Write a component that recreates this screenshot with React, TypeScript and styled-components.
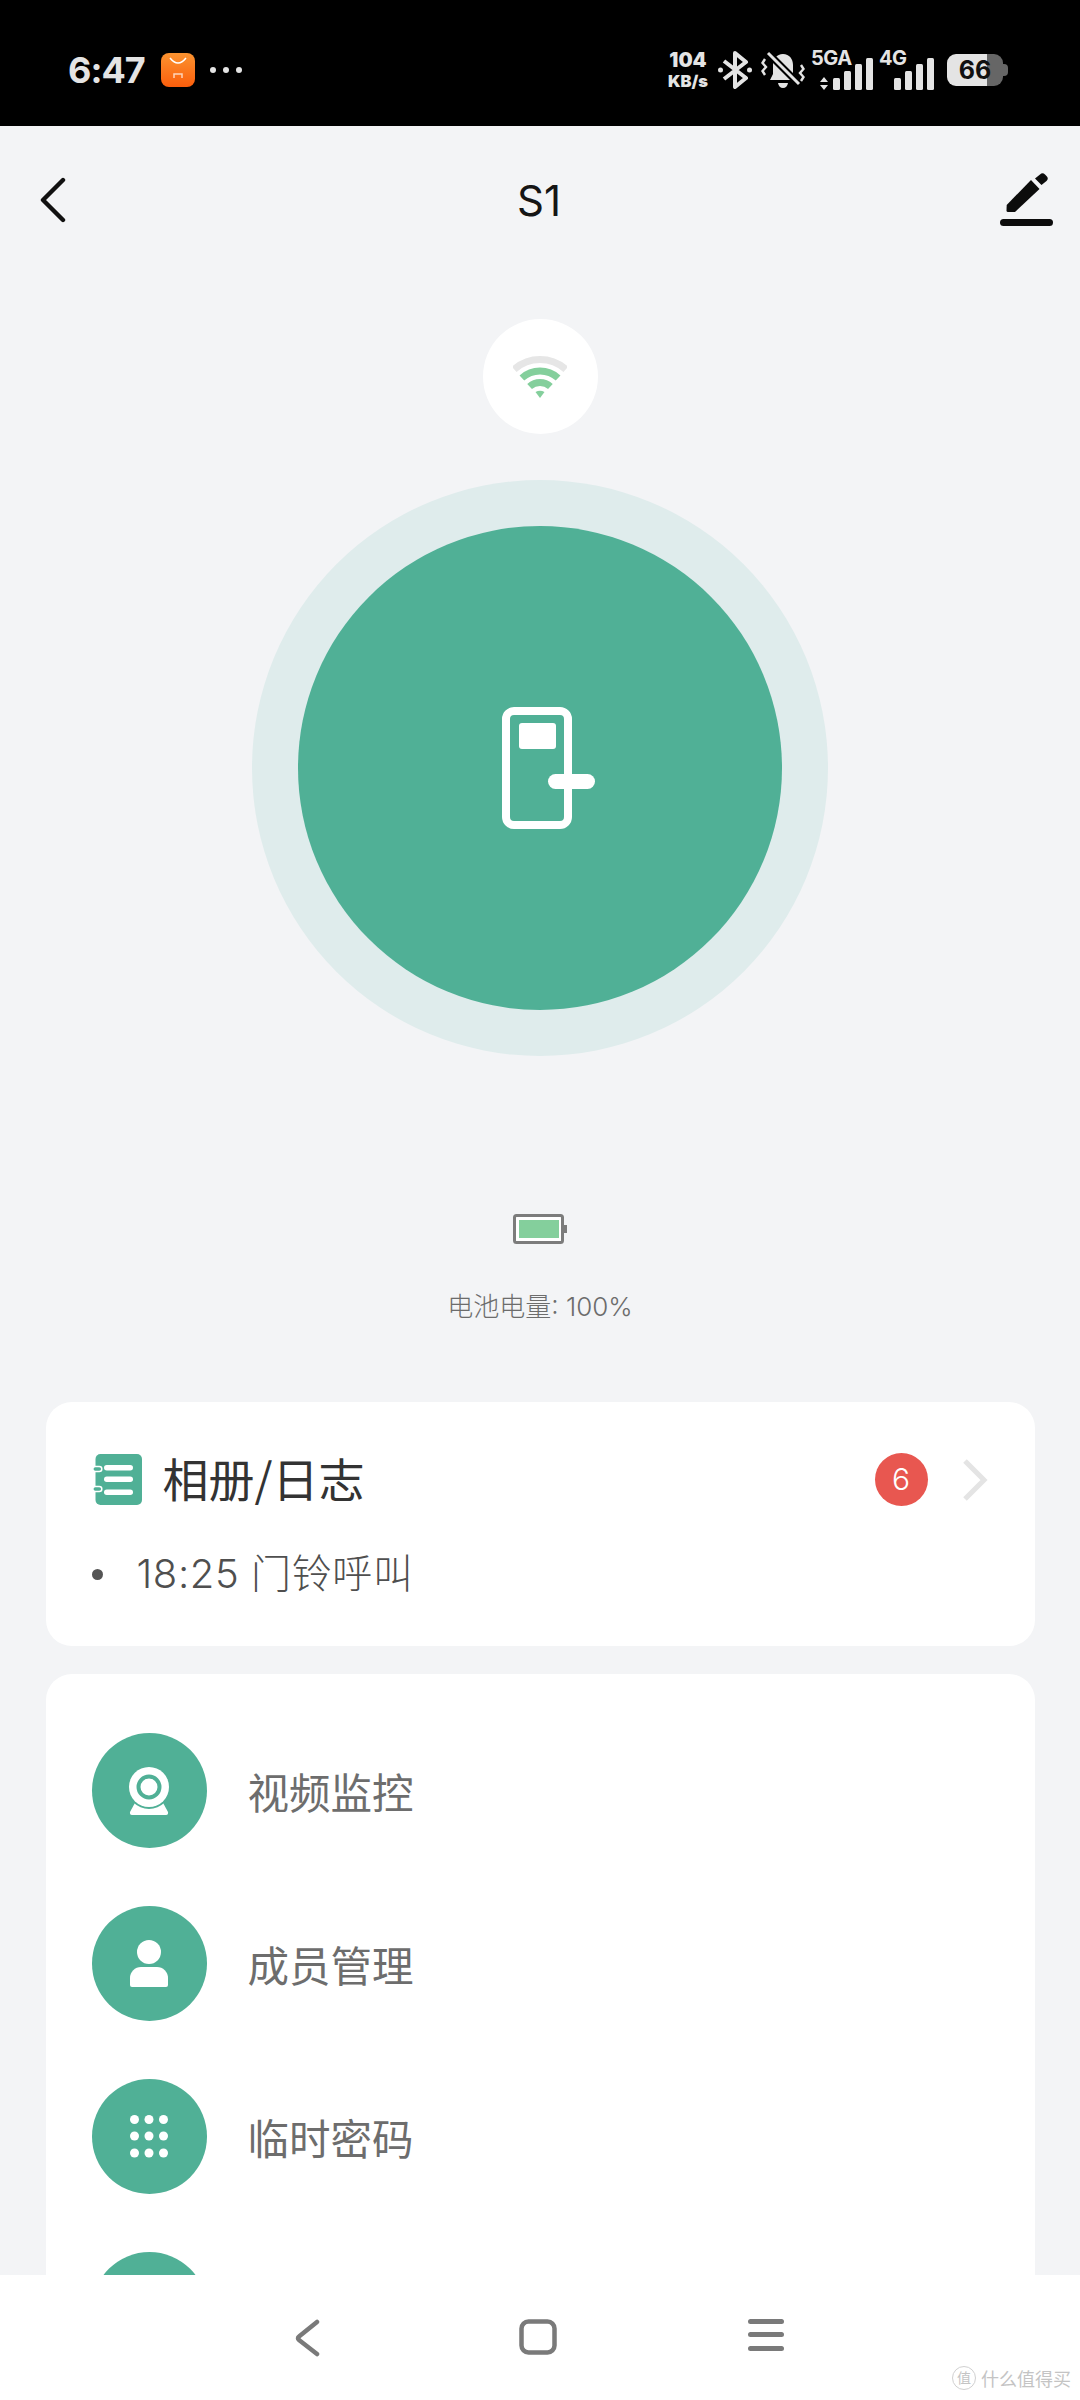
import React from "react";
import styled, { createGlobalStyle } from "styled-components";

const GREEN = "#50b096";
const CJK = `"Noto Sans CJK SC", "Noto Sans", sans-serif`;
const LATIN = `Inter, Roboto, "Noto Sans CJK SC", sans-serif`;

const GlobalStyle = createGlobalStyle`
	html, body {
		margin: 0;
		padding: 0;
		background: #f3f4f6;
	}
	* {
		box-sizing: border-box;
	}
`;

const Page = styled.div`
	width: 1080px;
	height: 2400px;
	display: flex;
	flex-direction: column;
	overflow: hidden;
	background: #f3f4f6;
	font-family: ${CJK};
`;

/* ---- status bar ---- */
const StatusBar = styled.div`
	height: 126px;
	flex: none;
	background: #000;
	color: #e4e4e4;
	display: flex;
	align-items: center;
	justify-content: space-between;
	padding: 14px 72px 0 68px;
	font-family: ${LATIN};
`;
const StatusLeft = styled.div`
	display: flex;
	align-items: center;
`;
const Time = styled.span`
	font-size: 36px;
	font-weight: 700;
	letter-spacing: -1px;
	margin-right: 16px;
`;
const StoreIcon = styled.div`
	width: 34px;
	height: 34px;
	border-radius: 8px;
	background: linear-gradient(#fb9330, #fb5e0c);
	margin-right: 15px;
	display: flex;
`;
const Dots = styled.div`
	display: flex;
	gap: 7px;
	& > i {
		width: 6px;
		height: 6px;
		border-radius: 50%;
		background: #e4e4e4;
	}
`;
const StatusRight = styled.div`
	display: flex;
	align-items: center;
	height: 40px;
`;
const Speed = styled.div`
	width: 44px;
	display: flex;
	flex-direction: column;
	align-items: center;
	font-weight: 700;
	line-height: 1;
	margin-right: 8px;
	& > b:first-child {
		font-size: 20px;
		margin-bottom: 3px;
	}
	& > b:last-child {
		font-size: 16.5px;
	}
`;
const IconSlot = styled.div<{ $gap?: number }>`
	display: flex;
	margin-right: ${(p) => p.$gap ?? 8}px;
`;
const Signal = styled.div<{ $w: number }>`
	position: relative;
	width: ${(p) => p.$w}px;
	height: 40px;
	display: flex;
	justify-content: flex-end;
	align-items: flex-end;
	margin-right: 6px;
`;
const NetLabel = styled.span`
	position: absolute;
	left: 0;
	top: -2px;
	font-size: 20px;
	font-weight: 700;
	line-height: 20px;
	letter-spacing: -0.5px;
`;
const Battery = styled.div`
	position: relative;
	width: 56px;
	height: 32px;
	margin: 0 5px 0 7px;
	border-radius: 9px;
	background: linear-gradient(90deg, #e4e4e4 71%, #666 71%);
	color: #111;
	font-size: 25px;
	font-weight: 700;
	line-height: 32px;
	text-align: center;
	&::after {
		content: "";
		position: absolute;
		right: -5px;
		top: 10px;
		width: 5px;
		height: 12px;
		border-radius: 0 4px 4px 0;
		background: #666;
	}
`;

/* ---- header ---- */
const Header = styled.header`
	height: 100px;
	flex: none;
	display: flex;
	align-items: center;
	justify-content: space-between;
	padding: 0 27px 0 40px;
	margin-top: 24px;
`;
const HeaderTitle = styled.h1`
	margin: 0;
	font-family: ${LATIN};
	font-size: 42px;
	font-weight: 400;
	color: #151515;
	transform: translateX(6px);
`;

/* ---- lock area ---- */
const Scroll = styled.main`
	flex: 1;
	min-height: 0;
	overflow: hidden;
	display: flex;
	flex-direction: column;
	align-items: center;
`;
const WifiBubble = styled.div`
	width: 115px;
	height: 115px;
	margin-top: 69px;
	border-radius: 50%;
	background: #fff;
	flex: none;
	display: flex;
	align-items: center;
	justify-content: center;
`;
const LockRing = styled.div`
	width: 576px;
	height: 576px;
	flex: none;
	margin-top: 46px;
	border-radius: 50%;
	background: #dfecec;
	display: flex;
	align-items: center;
	justify-content: center;
`;
const LockButton = styled.div`
	width: 484px;
	height: 484px;
	padding-left: 17px;
	border-radius: 50%;
	background: ${GREEN};
	display: flex;
	align-items: center;
	justify-content: center;
`;
const BatteryState = styled.div`
	margin-top: 158px;
	flex: none;
	display: flex;
	flex-direction: column;
	align-items: center;
	height: 112px;
`;
const BatteryLabel = styled.span`
	margin-top: 45px;
	font-family: ${LATIN};
	font-size: 26px;
	font-weight: 300;
	line-height: 36px;
	color: #6c6c6c;
`;

/* ---- cards ---- */
const Card = styled.section`
	width: 989px;
	flex: none;
	background: #fff;
	border-radius: 26px;
`;
const LogCard = styled(Card)`
	margin-top: 76px;
	height: 244px;
	padding: 50px 47px 0 46px;
`;
const LogHead = styled.div`
	display: flex;
	align-items: center;
	height: 54px;
`;
const LogTitle = styled.span`
	margin: -4px 0 0 21px;
	font-size: 46px;
	line-height: 54px;
	color: #333;
`;
const Badge = styled.span`
	margin: 1px 0 0 auto;
	width: 53px;
	height: 53px;
	border-radius: 50%;
	background: #e85750;
	color: #fff;
	font-family: ${LATIN};
	font-size: 30px;
	font-weight: 300;
	line-height: 53px;
	text-align: center;
`;
const ChevronSlot = styled.div`
	display: flex;
	margin: 2px 0 0 34px;
`;
const LogLine = styled.div`
	display: flex;
	align-items: center;
	margin-top: 40px;
	font-family: ${LATIN};
	font-size: 40px;
	font-weight: 300;
	letter-spacing: 0.6px;
	line-height: 56px;
	color: #4f4f4f;
	&::before {
		content: "";
		width: 11px;
		height: 11px;
		border-radius: 50%;
		background: #555;
		margin-right: 34px;
	}
`;
const MenuCard = styled(Card)`
	margin-top: 28px;
	padding: 59px 46px 0;
	display: flex;
	flex-direction: column;
	gap: 58px;
	min-height: 700px;
`;
const MenuRow = styled.div`
	display: flex;
	align-items: center;
	gap: 41px;
`;
const MenuIcon = styled.div`
	width: 115px;
	height: 115px;
	flex: none;
	border-radius: 50%;
	background: ${GREEN};
	display: flex;
	align-items: center;
	justify-content: center;
`;
const MenuLabel = styled.span`
	font-size: 41.500px;
	color: #6d6d6d;
`;

/* ---- navigation bar ---- */
const NavBar = styled.nav`
	position: relative;
	height: 125px;
	flex: none;
	background: #fff;
	display: flex;
	align-items: flex-start;
	padding-top: 44px;
`;
const NavSlot = styled.div<{ $left: number }>`
	display: flex;
	margin-left: ${(p) => p.$left}px;
`;
const Watermark = styled.div`
	position: absolute;
	right: 9px;
	bottom: 9px;
	display: flex;
	align-items: center;
	gap: 5px;
	color: #c4c4c4;
	font-size: 18px;
	line-height: 26px;
	& > i {
		width: 24px;
		height: 24px;
		border: 1.500px solid #d0d0d0;
		border-radius: 50%;
		font-size: 14px;
		font-style: normal;
		line-height: 21px;
		text-align: center;
	}
`;

const BackIcon = () => (
	<svg width="26" height="46" viewBox="0 0 26 46" fill="none" stroke="#111" strokeWidth="4.400" strokeLinecap="round" strokeLinejoin="round">
		<path d="M23 3 3 23l20 20" />
	</svg>
);

const EditIcon = () => (
	<svg width="53" height="54" viewBox="0 0 53 54" fill="#0c0c0c">
		<rect x="0" y="46" width="53" height="7" rx="3.500" />
		<path d="M6.700 32 31 7l8.500 9L15 39H8a1.500 1.500 0 0 1-1.500-1.500z" />
		<path d="M35 5.500 40 1.500a3.500 3.500 0 0 1 5 0l1.500 1.500a3.500 3.500 0 0 1 0 5L41.500 12z" />
	</svg>
);

const WifiIcon = () => (
	<svg width="54" height="44" viewBox="0 0 54 44" fill="none" strokeWidth="7">
		<path d="M1.200 14.400a38.500 38.500 0 0 1 51.600 0" stroke="#e6e6e6" />
		<path d="M8.900 23a27 27 0 0 1 36.200 0" stroke="#84cf9c" />
		<path d="M16.600 31.500a15.500 15.500 0 0 1 20.800 0" stroke="#84cf9c" />
		<path d="M27 43l-4.500-6q4.500-2.500 9 0z" fill="#84cf9c" />
	</svg>
);

const DoorIcon = () => (
	<svg width="93" height="122" viewBox="0 0 93 122">
		<rect x="4" y="4" width="62" height="114" rx="8" fill="none" stroke="#fff" strokeWidth="8" />
		<rect x="17" y="16" width="37" height="26" rx="3" fill="#fff" />
		<rect x="46" y="67" width="47" height="15" rx="7.500" fill="#fff" />
	</svg>
);

const LogIcon = () => (
	<svg width="50" height="51" viewBox="0 0 50 51">
		<rect x="3.500" y="0" width="46.500" height="51" rx="5" fill={GREEN} />
		<rect x="12" y="11" width="29" height="5.500" rx="2.750" fill="#fff" />
		<rect x="12" y="22.500" width="29" height="5.500" rx="2.750" fill="#fff" />
		<rect x="12" y="35.500" width="29" height="5.500" rx="2.750" fill="#fff" />
		<rect x="0.800" y="12.500" width="9" height="5" rx="2.500" fill={GREEN} stroke="#fff" strokeWidth="1.500" />
		<rect x="0.800" y="32.500" width="9" height="5" rx="2.500" fill={GREEN} stroke="#fff" strokeWidth="1.500" />
	</svg>
);

const CameraIcon = () => (
	<svg width="40" height="48" viewBox="0 0 40 48">
		<path d="M7 34h26l6 11q.5 3-2 3H3q-2.500 0-2-3z" fill="#fff" />
		<circle cx="20" cy="20" r="22" fill={GREEN} />
		<circle cx="20" cy="20" r="20" fill="#fff" />
		<circle cx="20" cy="20" r="10.500" fill="none" stroke={GREEN} strokeWidth="4" />
	</svg>
);

const UserIcon = () => (
	<svg width="38" height="47" viewBox="0 0 38 47" fill="#fff">
		<circle cx="19" cy="12" r="12" />
		<path d="M0 38a11 11 0 0 1 11-11h16a11 11 0 0 1 11 11v7a2 2 0 0 1-2 2H2a2 2 0 0 1-2-2z" />
	</svg>
);

const KeypadIcon = () => (
	<svg width="38" height="43" viewBox="0 0 38 43" fill="#fff">
		{[4.5, 21, 38].map((y) =>
			[4.5, 19, 33.5].map((x) => <circle key={`${x}-${y}`} cx={x} cy={y} r="4.500" />),
		)}
	</svg>
);

const NavBackIcon = () => (
	<svg width="26" height="38" viewBox="0 0 26 38" fill="none" stroke="#7a7a7a" strokeWidth="4.500" strokeLinecap="round" strokeLinejoin="round">
		<path d="M23 3 5 17.500q-2 1.500 0 3.500l18 14" />
	</svg>
);

const NavHomeIcon = () => (
	<svg width="38" height="36" viewBox="0 0 38 36" fill="none" stroke="#7a7a7a" strokeWidth="4.500">
		<rect x="2.500" y="2.500" width="33" height="31" rx="7" />
	</svg>
);

const NavMenuIcon = () => (
	<svg width="36" height="32" viewBox="0 0 36 32" fill="#7a7a7a">
		<rect x="0" y="0" width="36" height="5" rx="2.500" />
		<rect x="0" y="13" width="36" height="5" rx="2.500" />
		<rect x="0" y="27" width="36" height="5" rx="2.500" />
	</svg>
);

const BluetoothIcon = () => (
	<svg width="34" height="38" viewBox="0 0 34 38" fill="none" stroke="#e4e4e4" strokeWidth="4" strokeLinejoin="round">
		<path d="M6 10 28 27 17 36V2l11 9L6 28" />
		<circle cx="2.500" cy="19" r="2.500" fill="#e4e4e4" stroke="none" />
		<circle cx="31.500" cy="19" r="2.500" fill="#e4e4e4" stroke="none" />
	</svg>
);

const MutedBellIcon = () => (
	<svg width="44" height="38" viewBox="0 0 44 38" fill="none">
		<path d="M22 3c6.500 0 10 5 10 11v9l3 6H9l3-6v-9c0-6 3.500-11 10-11z" fill="#e4e4e4" />
		<path d="M17 32h10q-1 5-5 5t-5-5z" fill="#e4e4e4" />
		<path d="M7 2l31 31" stroke="#000" strokeWidth="7" />
		<path d="M7 2l31 31" stroke="#e4e4e4" strokeWidth="3" />
		<path d="M4 8 1.500 12 5 16l-3.500 4L4 24M40 14l2.500 4L39 22l3.500 4L40 30" stroke="#e4e4e4" strokeWidth="2.400" />
	</svg>
);

const SignalBars = ({ arrows }: { arrows?: boolean }) => (
	<svg width={arrows ? 53 : 40} height="32" viewBox={arrows ? "-13 0 53 32" : "0 0 40 32"} fill="#e4e4e4">
		{arrows && <path d="M-9 19l4 5h-8zM-9 32l4-5h-8z" />}
		<rect x="0" y="20" width="7" height="12" rx="1.500" />
		<rect x="11" y="13" width="7" height="19" rx="1.500" />
		<rect x="22" y="6" width="7" height="26" rx="1.500" />
		<rect x="33" y="0" width="7" height="32" rx="1.500" />
	</svg>
);

// the fourth row is cut off by the nav bar, only the top of its circle shows
const menuItems = [
	{ id: "video", label: "视频监控", icon: <CameraIcon /> },
	{ id: "member", label: "成员管理", icon: <UserIcon /> },
	{ id: "password", label: "临时密码", icon: <KeypadIcon /> },
	{ id: "more", label: "", icon: null },
];

const App: React.FC = () => {
	return (
		<Page>
			<GlobalStyle />
			<StatusBar>
				<StatusLeft>
					<Time>6:47</Time>
					<StoreIcon>
						<svg width="34" height="34" viewBox="0 0 34 34" fill="none" stroke="#fff" strokeWidth="1.500">
							<path d="M9 5q8 10 16 0" />
							<path d="M13 25v-4h8v4" opacity="0.7" />
						</svg>
					</StoreIcon>
					<Dots>
						<i />
						<i />
						<i />
					</Dots>
				</StatusLeft>
				<StatusRight>
					<Speed>
						<b>104</b>
						<b>KB/s</b>
					</Speed>
					<IconSlot $gap={9}>
						<BluetoothIcon />
					</IconSlot>
					<IconSlot $gap={6}>
						<MutedBellIcon />
					</IconSlot>
					<Signal $w={62}>
						<NetLabel>5GA</NetLabel>
						<SignalBars arrows />
					</Signal>
					<Signal $w={55}>
						<NetLabel>4G</NetLabel>
						<SignalBars />
					</Signal>
					<Battery>66</Battery>
				</StatusRight>
			</StatusBar>

			<Header>
				<BackIcon />
				<HeaderTitle>S1</HeaderTitle>
				<EditIcon />
			</Header>

			<Scroll>
				<WifiBubble>
					<WifiIcon />
				</WifiBubble>
				<LockRing>
					<LockButton>
						<DoorIcon />
					</LockButton>
				</LockRing>

				<BatteryState>
					<svg width="54" height="30" viewBox="0 0 54 30">
						<rect x="1.500" y="1.500" width="48" height="27" rx="2" fill="#fff" stroke="#7c7c7c" strokeWidth="3" />
						<rect x="6" y="6" width="40" height="18" fill="#84cf9c" />
						<rect x="50" y="11" width="4" height="8" fill="#7c7c7c" />
					</svg>
					<BatteryLabel>电池电量: 100%</BatteryLabel>
				</BatteryState>

				<LogCard>
					<LogHead>
						<LogIcon />
						<LogTitle>相册/日志</LogTitle>
						<Badge>6</Badge>
						<ChevronSlot>
							<svg width="26" height="44" viewBox="0 0 26 44" fill="none" stroke="#e4e4e4" strokeWidth="5">
								<path d="M3 3l19 19L3 41" />
							</svg>
						</ChevronSlot>
					</LogHead>
					<LogLine>18:25 门铃呼叫</LogLine>
				</LogCard>

				<MenuCard>
					{menuItems.map((item) => (
						<MenuRow key={item.id}>
							<MenuIcon>{item.icon}</MenuIcon>
							<MenuLabel>{item.label}</MenuLabel>
						</MenuRow>
					))}
				</MenuCard>
			</Scroll>

			<NavBar>
				<NavSlot $left={294}>
					<NavBackIcon />
				</NavSlot>
				<NavSlot $left={199}>
					<NavHomeIcon />
				</NavSlot>
				<NavSlot $left={191}>
					<NavMenuIcon />
				</NavSlot>
				<Watermark>
					<i>值</i>
					什么值得买
				</Watermark>
			</NavBar>
		</Page>
	);
};

export default App;
